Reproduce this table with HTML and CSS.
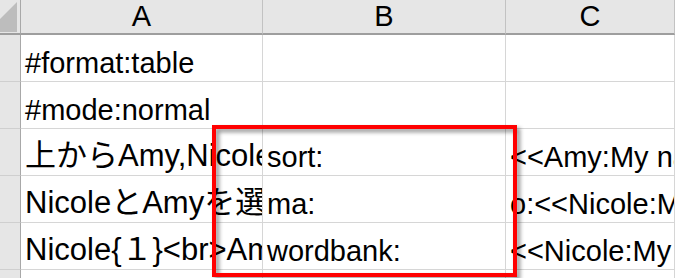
FILE: index.html
```html
<!DOCTYPE html>
<html lang="ja">
<head>
  <meta charset="UTF-8">
  <meta name="viewport" content="width=device-width, initial-scale=1">
  <title>Sheet1</title>
  <link rel="stylesheet" href="styles.css">
</head>
<body>

<div class="sheet">
  <div class="grid">
    <div class="cell corner">
      <svg width="20" height="33" viewBox="0 0 20 33"><polygon points="17,2 17,32 -13,32" fill="#bdbdbd"/></svg>
    </div>
    <div class="cell colhead">A</div>
    <div class="cell colhead">B</div>
    <div class="cell colhead">C</div>

    <div class="cell rowhead"></div>
    <div class="cell">#format:table</div>
    <div class="cell"></div>
    <div class="cell"></div>

    <div class="cell rowhead"></div>
    <div class="cell">#mode:normal</div>
    <div class="cell"></div>
    <div class="cell"></div>

    <div class="cell rowhead"></div>
    <div class="cell jp">上からAmy,Nicole,Bob</div>
    <div class="cell">sort:</div>
    <div class="cell">&lt;&lt;Amy:My name is Amy.&gt;&gt;</div>

    <div class="cell rowhead"></div>
    <div class="cell jp">NicoleとAmyを選ぶ</div>
    <div class="cell">ma:</div>
    <div class="cell">o:&lt;&lt;Nicole:My name is Nicole.&gt;&gt;</div>

    <div class="cell rowhead"></div>
    <div class="cell jp">Nicole{１}&lt;br&gt;Amy{２}</div>
    <div class="cell">wordbank:</div>
    <div class="cell">&lt;&lt;Nicole:My name is Nicole.&gt;&gt;</div>

    <div class="cell rowhead"></div>
    <div class="cell"></div>
    <div class="cell"></div>
    <div class="cell"></div>
  </div>

  <!-- red frame drawn over columns A/B -->
  <div class="callout"></div>
</div>

</body>
</html>
```

FILE: styles.css
```css
* {
  box-sizing: border-box;
}

body {
  margin: 0;
  background: #fff;
  font-family: "Liberation Sans", Arial, "Noto Sans CJK JP", sans-serif;
}

.sheet {
  position: relative;
  width: 675px;
  height: 278px;
  overflow: hidden;
}

.grid {
  display: grid;
  grid-template-columns: 21px 242px 243px 1fr;
  grid-template-rows: 35px repeat(6, 47px);
}

.cell {
  display: flex;
  align-items: flex-end;
  padding: 0 0 2px 4px;
  font-size: 29px;
  line-height: 32px;
  color: #000;
  white-space: nowrap;
  overflow: hidden;
  border-right: 1px solid #d6d6d6;
  border-bottom: 1px solid #d6d6d6;
}

/* japanese cells use a slightly wider face */
.cell.jp {
  font-size: 31px;
  padding-bottom: 3px;
}

.corner,
.colhead {
  background: #e6e6e6;
  border-bottom: 2px solid #9e9e9e;
  border-right: 1px solid #c2c2c2;
}

.corner {
  padding: 0;
  align-items: flex-start;
  border-right-color: #a8a8a8;
}

.colhead {
  justify-content: center;
  padding: 0 0 1px 0;
}

.rowhead {
  background: #e6e6e6;
  padding: 0;
  border-right: 1px solid #a8a8a8;
  border-bottom: 1px solid #cfcfcf;
}

.callout {
  position: absolute;
  left: 212px;
  top: 125px;
  width: 305px;
  height: 152px;
  border: 4px solid #ff0000;
  filter: drop-shadow(3px 3px 2px rgba(0, 0, 0, 0.45));
}
```
